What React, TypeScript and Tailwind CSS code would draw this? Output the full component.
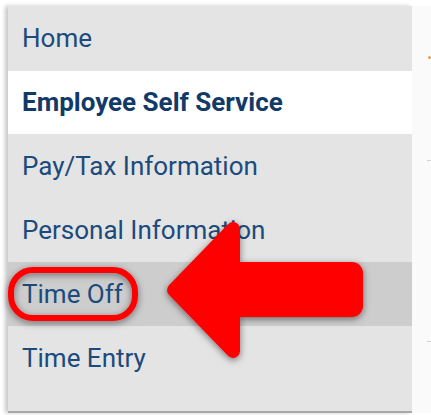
import React from "react";

type Item = { label: string; h: string; bg: string; bold?: boolean };

const items: Item[] = [
  { label: "Home", h: "h-[65px]", bg: "bg-[#e4e4e4]" },
  { label: "Employee Self Service", h: "h-[63px]", bg: "bg-white", bold: true },
  { label: "Pay/Tax Information", h: "h-[64px]", bg: "bg-[#e4e4e4]" },
  { label: "Personal Information", h: "h-[64px]", bg: "bg-[#e4e4e4]" },
  { label: "Time Off", h: "h-[64px]", bg: "bg-[#cdcdcd]" },
  { label: "Time Entry", h: "h-[64px]", bg: "bg-[#e4e4e4]" },
];

function Callout() {
  return (
    <svg
      className="absolute left-0 top-0 pointer-events-none"
      width="431"
      height="415"
      viewBox="0 0 431 415"
    >
      <defs>
        <filter id="soft" x="-30%" y="-30%" width="160%" height="160%">
          <feDropShadow dx="0" dy="2" stdDeviation="3.5" floodColor="#000" floodOpacity="0.5" />
        </filter>
      </defs>
      {/* ring around the selected menu entry */}
      <rect
        x="11"
        y="270"
        width="124"
        height="48"
        rx="22"
        fill="none"
        stroke="#ff0000"
        strokeWidth="6"
        filter="url(#soft)"
      />
      {/* pointing arrow */}
      <g filter="url(#soft)">
        <path
          d="M233 229 L174 290 L233 351 Z"
          fill="#ff0000"
          stroke="#ff0000"
          strokeWidth="14"
          strokeLinejoin="round"
        />
        <rect x="228" y="262" width="135" height="55" rx="11" fill="#ff0000" />
      </g>
    </svg>
  );
}

export default function App() {
  return (
    <div
      className="relative w-[431px] h-[415px] overflow-hidden bg-white"
      style={{ fontFamily: "Roboto, 'Liberation Sans', sans-serif" }}
    >
      <div className="flex pt-[6px] pl-[8px] h-[413px]">
        <nav className="w-[404px] flex flex-col bg-[#e4e4e4] shadow-[-3px_0_4px_rgba(0,0,0,0.22)] border-b-2 border-[#a8a8a8]">
          {items.map((it) => (
            <div
              key={it.label}
              className={`${it.h} ${it.bg} flex items-center pl-[14px] text-[26px] ${
                it.bold ? "font-bold text-[#123a68]" : "text-[#1b4b7c]"
              }`}
            >
              {it.label}
            </div>
          ))}
          <div className="flex-1 bg-[#e4e4e4]" />
        </nav>
        <div className="flex-1 relative bg-[#fafafa]">
          <div className="absolute left-[16px] top-[50px] w-[3px] h-[3px] rounded-full bg-[#f0a040]" />
          <div className="absolute left-[15px] top-[154px] w-[4px] h-[1px] bg-[#d0d0d0]" />
          <div className="absolute left-[15px] top-[335px] w-[4px] h-[1px] bg-[#d0d0d0]" />
        </div>
      </div>
      <Callout />
    </div>
  );
}
